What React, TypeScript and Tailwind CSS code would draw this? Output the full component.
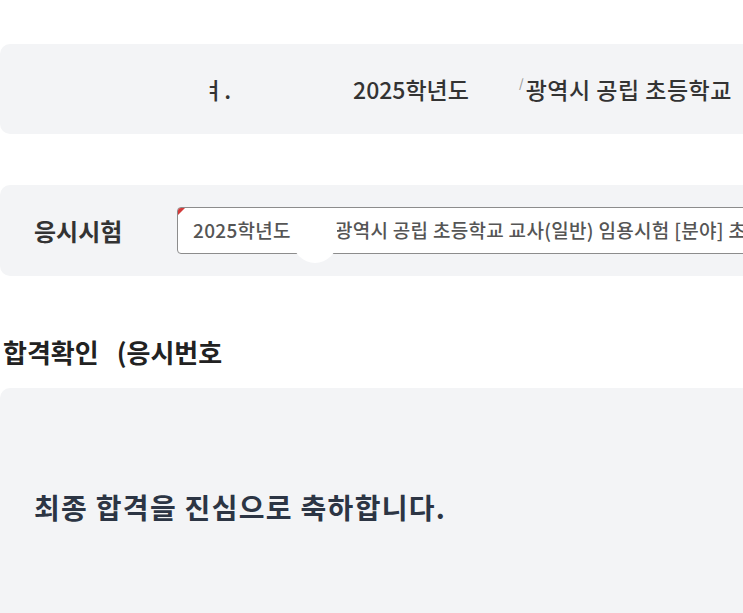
const App = () => {
    return (
        <div
            className="relative w-[743px] h-[613px] overflow-hidden bg-white"
            style={{ fontFamily: '"Noto Sans CJK KR", "Noto Sans", sans-serif' }}
        >
            {/* exam title bar */}
            <div className="mt-[44px] h-[90px] rounded-l-[10px] bg-[#f3f4f6] flex items-center text-[23px] font-medium text-[#333] whitespace-nowrap">
                <span className="ml-[203px]">ㅕ.</span>
                <span className="ml-[122px]">2025학년도</span>
                <span className="ml-[50px] text-[#999] text-[12px] -mt-3">/</span>
                <span className="ml-[2px] tracking-[0.5px]">광역시 공립 초등학교</span>
            </div>

            {/* selected exam */}
            <div className="mt-[51px] h-[91px] rounded-l-[10px] bg-[#f3f4f6] flex items-center whitespace-nowrap">
                <span className="ml-[34px] w-[143px] text-[24px] font-bold text-[#333]">응시시험</span>
                <div className="relative flex-1 h-[47px] -mr-[10px] rounded-[4px] border-[1.5px] border-[#8c8c8c] bg-white flex items-center pl-[15px] text-[19px] tracking-[0.3px] font-medium text-[#555] overflow-hidden">
                    <span className="absolute left-0 top-0 w-0 h-0 border-t-[7px] border-r-[7px] border-t-[#d23a3a] border-r-transparent" />
                    <span>2025학년도</span>
                    <span className="ml-[44px]">광역시 공립 초등학교 교사(일반) 임용시험 [분야] 초등</span>
                </div>
            </div>

            <div className="absolute left-[293px] top-[208px] w-[44px] h-[55px] rounded-[22px] bg-white" />

            {/* result */}
            <h2 className="mt-[58px] h-[34px] pl-[3px] flex items-center text-[26px] font-bold text-[#222] whitespace-nowrap">
                합격확인 <span className="ml-[18px]">(응시번호</span>
            </h2>

            <div className="mt-[20px] h-[260px] rounded-l-[10px] bg-[#f3f4f6] pt-[100px] pl-[34px]">
                <p className="text-[28px] leading-[38px] tracking-[1.3px] font-semibold text-[#2c3544] whitespace-nowrap">
                    최종 합격을 진심으로 축하합니다.
                </p>
            </div>
        </div>
    );
};

export default App;
